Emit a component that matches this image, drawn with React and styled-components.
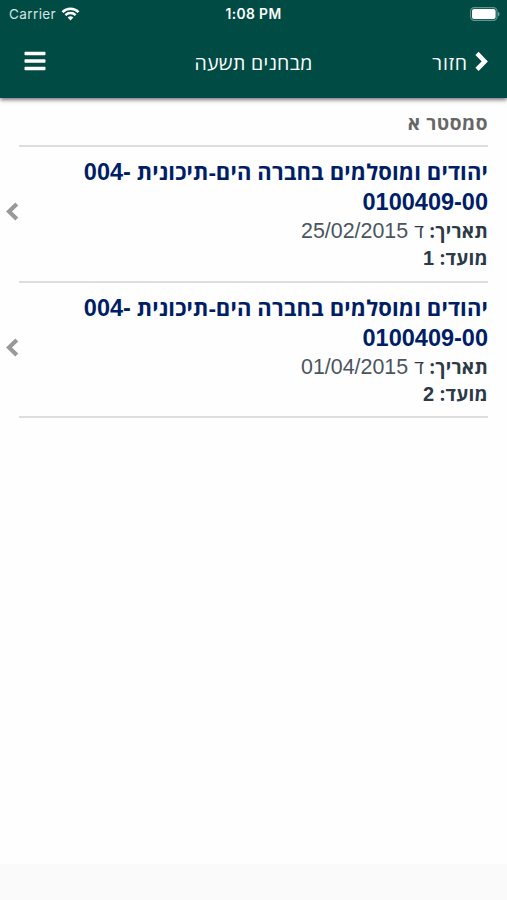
import styled, { createGlobalStyle } from "styled-components";
import { FaBars } from "react-icons/fa";

const exams = [
  { id: 1, date: "25/02/2015", term: "1" },
  { id: 2, date: "01/04/2015", term: "2" },
];

const StatusBar = () => {
  return (
    <Status>
      <Carrier>
        Carrier
        <svg width="19" height="14" viewBox="0 0 18 14" fill="none" stroke="#fff">
          <path d="M1 5.1C5.4.6 12.6.6 17 5.1" strokeWidth="2.5" />
          <path d="M3.9 8.1c2.8-2.8 7.4-2.8 10.2 0" strokeWidth="2.4" />
          <path d="M6.2 10.4Q9 8 11.8 10.4L9 13.4Z" fill="#fff" stroke="none" />
        </svg>
      </Carrier>
      <Clock>1:08 PM</Clock>
      <Battery>
        <svg width="30" height="14" viewBox="0 0 30 14">
          <rect x=".6" y=".6" width="26.4" height="12.8" rx="3.6" fill="none" stroke="#fff" strokeOpacity=".4" strokeWidth="1.1" />
          <rect x="2" y="2" width="23.6" height="10" rx="2" fill="#fff" />
          <path d="M28 4.7c2 .8 2 3.8 0 4.6z" fill="#fff" fillOpacity=".45" />
        </svg>
      </Battery>
    </Status>
  );
};

const ExamRow = ({ date, term }) => {
  return (
    <Row>
      <Details>
        <Course>
          יהודים ומוסלמים בחברה הים-תיכונית <Code>004-</Code>
        </Course>
        <Course>
          <Code>0100409-00</Code>
        </Course>
        <Line>
          <b>תאריך:</b> ד <DateText>{date}</DateText>
        </Line>
        <Line>
          <b>
            מועד: <Term>{term}</Term>
          </b>
        </Line>
      </Details>
      <Arrow>
        <svg width="13" height="19" viewBox="0 0 13 19">
          <path d="M10.8 2L3 9.5l7.8 7.5" />
        </svg>
      </Arrow>
    </Row>
  );
};

const App = () => {
  return (
    <Page>
      <GlobalStyle />
      <Header>
        <StatusBar />
        <NavBar>
          <Back>
            <svg width="14" height="21" viewBox="0 0 14 21">
              <path d="M3 2.4l7.8 8L3 18.4" />
            </svg>
            <NavText $spacing="0.9px">חזור</NavText>
          </Back>
          <NavText $spacing="0.3px">מבחנים תשעה</NavText>
          <Menu>
            <FaBars />
          </Menu>
        </NavBar>
      </Header>
      <Content>
        <Semester>סמסטר א</Semester>
        {exams.map((exam) => (
          <ExamRow key={exam.id} date={exam.date} term={exam.term} />
        ))}
      </Content>
      <Footer />
    </Page>
  );
};

export default App;

const GlobalStyle = createGlobalStyle`
  * {
    box-sizing: border-box;
  }
  body {
    margin: 0;
    background: #fefefe;
    font-family: "Open Sans", sans-serif;
  }
`;

const Page = styled.div`
  display: flex;
  flex-direction: column;
  height: 900px;
  direction: rtl;
`;

const Header = styled.header`
  height: 98px;
  color: #fff;
  background: #004c45;
  box-shadow: 0 2px 4px rgba(20, 0, 20, 0.55);
`;

const Status = styled.div`
  display: grid;
  grid-template-columns: 1fr auto 1fr;
  align-items: center;
  height: 27px;
  padding: 0 7px 0 9px;
  direction: ltr;
  font-family: Inter, sans-serif;
  font-size: 13px;
`;

const Carrier = styled.div`
  display: flex;
  align-items: center;
  gap: 5px;
  font-size: 13.5px;
  letter-spacing: 0.4px;
  color: #d5e4e2;
`;

const Clock = styled.div`
  margin-right: 2px;
  font-size: 13.8px;
  font-weight: 600;
  letter-spacing: 0.4px;
`;

const Battery = styled.div`
  display: flex;
  justify-content: flex-end;
`;

const NavBar = styled.div`
  display: grid;
  grid-template-columns: 1fr auto 1fr;
  align-items: center;
  height: 71px;
  padding: 0 19px 3px 19px;
`;

const Back = styled.div`
  display: flex;
  align-items: center;
  gap: 6px;
  svg {
    fill: none;
    stroke: #fff;
    stroke-width: 4.4;
  }
`;

const NavText = styled.span`
  padding-top: 2px;
  font-size: 19.5px;
  letter-spacing: ${({ $spacing }) => $spacing};
`;

const Menu = styled.div`
  display: flex;
  justify-content: flex-end;
  padding-left: 5px;
  svg {
    width: 22px;
    height: 24px;
  }
`;

const Content = styled.main`
  flex: 1;
`;

const Semester = styled.div`
  height: 49px;
  margin: 0 19px;
  padding-top: 11px;
  border-bottom: 2px solid #dedede;
  color: #666;
  font-size: 19px;
  font-weight: 700;
  letter-spacing: 0.55px;
  line-height: 28px;
`;

const Row = styled.div`
  display: flex;
  align-items: center;
  justify-content: space-between;
  padding-right: 19px;
`;

const Details = styled.div`
  width: 469px;
  height: 135.5px;
  padding-top: 9px;
  border-bottom: 2px solid #dedede;
  white-space: nowrap;
`;

const Course = styled.div`
  height: 30px;
  color: #001e66;
  font-size: 22px;
  font-weight: 700;
  letter-spacing: 0.13px;
  line-height: 30px;
`;

const Code = styled.bdi`
  direction: ltr;
  font-family: "Liberation Sans", sans-serif;
  font-size: 23.5px;
  letter-spacing: 0;
`;

const Line = styled.div`
  height: 27px;
  color: #2c3a47;
  font-size: 19px;
  letter-spacing: 0.3px;
  line-height: 31px;
`;

const DateText = styled.bdi`
  margin-right: 1px;
  color: #4a5560;
  font-family: "Liberation Sans", sans-serif;
  font-size: 21.4px;
  letter-spacing: 0;
`;

const Term = styled.bdi`
  font-family: "Liberation Sans", sans-serif;
  font-size: 20px;
`;

const Arrow = styled.div`
  display: flex;
  margin-left: 6px;
  padding-bottom: 6px;
  svg {
    fill: none;
    stroke: #999;
    stroke-width: 4.2;
  }
`;

const Footer = styled.footer`
  height: 36px;
  background: #fafafa;
`;
